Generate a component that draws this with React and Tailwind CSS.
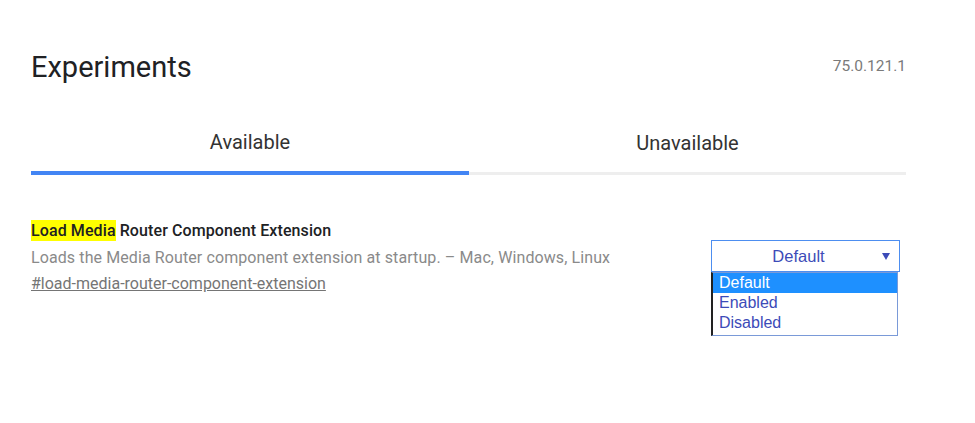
export default function App() {
  return (
    <div className="min-h-screen bg-white font-['Roboto',sans-serif]">
      <div className="w-[875px] ml-[31px] pt-[47px]">
        <div className="flex items-start justify-between">
          <h1 className="text-[29px] leading-[40px] text-[#202124] font-normal">Experiments</h1>
          <span className="text-[15.5px] text-[#7a7a7a] mt-[8px]">75.0.121.1</span>
        </div>

        <div className="flex mt-[39px]">
          <div className="w-[438px] flex flex-col items-center">
            <div className="text-[20px] leading-[24px] text-[#333] h-[45px] pt-[4px]">Available</div>
            <div className="w-full h-[4px] bg-[#4285f4]"></div>
          </div>
          <div className="flex-1 flex flex-col items-center">
            <div className="text-[20px] leading-[24px] text-[#333] h-[45px] pt-[5px]">Unavailable</div>
            <div className="w-full h-[3px] bg-[#eeeeee] mt-[1px]"></div>
          </div>
        </div>

        <div className="flex justify-between mt-[46px]">
          <div>
            <h2 className="text-[16px] leading-[20px] font-medium text-[#202124] tracking-[0.1px]">
              <span className="bg-[#ffff00] py-[1px]">Load Media</span> Router Component Extension
            </h2>
            <p className="text-[16px] leading-[20px] text-[#8a8a8a] mt-[7px] tracking-[0.1px]">
              Loads the Media Router component extension at startup. – Mac, Windows, Linux
            </p>
            <a className="block text-[16px] leading-[20px] text-[#757575] underline mt-[6px]">
              #load-media-router-component-extension
            </a>
          </div>

          <div className="relative w-[189px] mr-[6px] mt-[19px] font-['Liberation_Sans',sans-serif]">
            <div className="h-[32px] border border-[#4d8ef0] flex items-center justify-center relative pr-[14px] text-[16.5px] text-[#3c4bb8]">
              Default
              <svg className="absolute right-[9px] top-[12px]" width="8" height="7" viewBox="0 0 8 7">
                <path d="M0 0 H8 L4 7 Z" fill="#3c4bb8" />
              </svg>
            </div>
            <div className="w-[187px] border border-[#7a9ad8] border-l-2 border-l-[#222] text-[16px] leading-[20px] text-[#3c4bb8]">
              <div className="bg-[#1e90ff] text-white pl-[6px]">Default</div>
              <div className="pl-[6px]">Enabled</div>
              <div className="pl-[6px]">Disabled</div>
              <div className="h-[2px]"></div>
            </div>
          </div>
        </div>
      </div>
    </div>
  );
}
